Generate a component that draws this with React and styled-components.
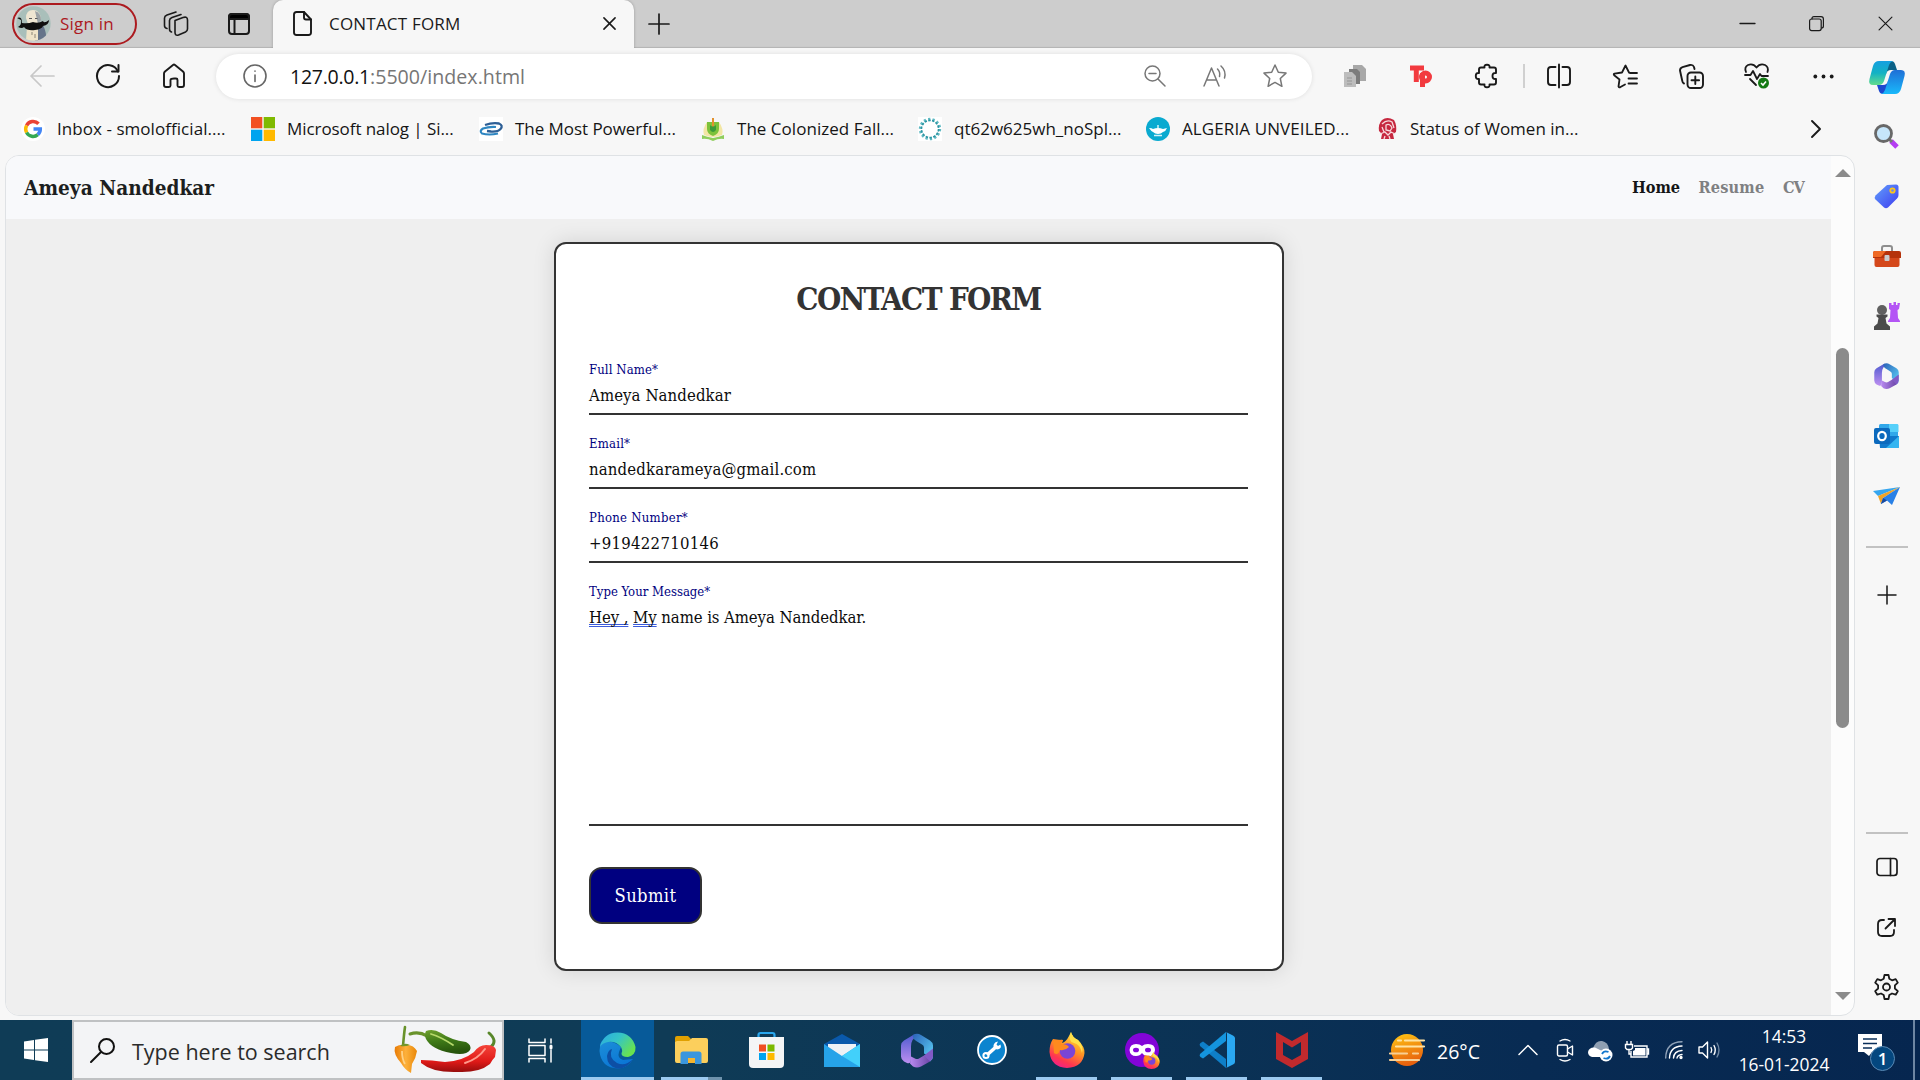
import React from 'react';
import styled, { createGlobalStyle } from 'styled-components';

const sans = '"Open Sans", "Noto Sans", sans-serif';
const serif = '"DejaVu Serif Condensed", "DejaVu Serif", serif';

const GlobalStyle = createGlobalStyle`
  *, *::before, *::after { box-sizing: border-box; }
  body { margin: 0; overflow: hidden; background: #f7f7f7; }
`;

const Desktop = styled.div`
  display: flex;
  flex-direction: column;
  width: 1920px;
  height: 1080px;
  overflow: hidden;
  font-family: ${sans};
  color: #1b1b1b;
`;

const Svg = styled.svg`
  display: block;
  flex: none;
  width: ${p => p.$w}px;
  height: ${p => p.$h || p.$w}px;
  overflow: visible;
`;

const Line = ({ w, h, vb, color = '#1a1a1a', sw = 1.7, children }) => (
  <Svg $w={w} $h={h || w} viewBox={vb || `0 0 ${w} ${h || w}`} fill="none" stroke={color}
    strokeWidth={sw} strokeLinecap="round" strokeLinejoin="round">{children}</Svg>
);

const Cell = styled.div`
  display: flex;
  align-items: center;
  justify-content: center;
  flex: none;
  width: ${p => p.$w}px;
  height: 100%;
`;

const Spacer = styled.div`flex: 1;`;

/* ---------- Tab strip ---------- */
const TabStrip = styled.header`
  display: flex;
  height: 48px;
  flex: none;
  padding-bottom: 1px;
  background: #cdcdcd;
  box-shadow: inset 0 -2px 1px -1px #b4b4b4;
`;
const Profile = styled.div`
  display: flex;
  align-items: center;
  gap: 9px;
  width: 125px;
  height: 42px;
  margin: 3px 7px 0 12px;
  padding: 0 0 1px 2px;
  border: 2px solid #ac1a1f;
  border-radius: 21px;
  color: #ac1a1f;
  font-size: 17px;
  letter-spacing: 0.2px;
  line-height: 22px;
  white-space: nowrap;
`;
const Tab = styled.div`
  display: flex;
  align-items: center;
  width: 361px;
  height: 48px;
  margin-left: 3px;
  padding: 0 18px 1px 20px;
  background: #f7f7f7;
  border-radius: 10px 10px 0 0;
  box-shadow: 0 0 3px rgba(0, 0, 0, 0.25);
  clip-path: inset(0 -4px 0 -4px);
`;
const TabTitle = styled.span`
  flex: 1;
  padding-left: 17px;
  font-size: 17px;
  line-height: 22px;
  letter-spacing: 0.2px;
`;

/* ---------- Browser frame ---------- */
const Browser = styled.div`
  display: flex;
  height: 972px;
  flex: none;
  background: #f7f7f7;
`;
const BrowserMain = styled.div`
  display: flex;
  flex-direction: column;
  width: 1855px;
  flex: none;
`;
const Toolbar = styled.div`
  display: flex;
  align-items: center;
  height: 57px;
  padding: 0 0 1px 9px;
`;
const AddressBar = styled.div`
  display: flex;
  align-items: center;
  flex: none;
  width: 1096px;
  height: 45px;
  margin: 0 10px 0 9px;
  padding: 0 7px 0 27px;
  border-radius: 23px;
  background: #fff;
  box-shadow: 0 0 5px rgba(0, 0, 0, 0.1);
`;
const Url = styled.span`
  flex: 1;
  padding-left: 23px;
  font-size: 19.6px;
  letter-spacing: 0.03px;
  color: #767676;
`;
const Host = styled.span`
  color: #111;
  letter-spacing: -0.3px;
`;
const Divider = styled.div`
  flex: none;
  width: 2px;
  height: 24px;
  margin: 0 1px 0 3px;
  background: #d0d0d0;
`;
const Bookmarks = styled.div`
  display: flex;
  align-items: center;
  height: 48px;
  padding: 0 34px 1px 21px;
  margin-bottom: 2px;
`;
const Bookmark = styled.div`
  display: flex;
  align-items: center;
  gap: 12px;
  width: ${p => p.$w}px;
  font-size: 17px;
  line-height: 22px;
  letter-spacing: ${p => p.$ls || 0}px;
  white-space: nowrap;
  color: #151515;
`;

/* ---------- Page ---------- */
const Page = styled.div`
  display: flex;
  width: 1850px;
  height: 861px;
  margin-left: 5px;
  border: 1px solid #dfe2e5;
  border-radius: 14px;
  overflow: hidden;
  background: #fcfcfc;
`;
const Content = styled.div`
  display: flex;
  flex-direction: column;
  width: 1825px;
  background: #efefef;
  font-family: ${serif};
`;
const Navbar = styled.nav`
  display: flex;
  align-items: center;
  height: 63px;
  flex: none;
  padding: 0 27px 0 18px;
  background: #f8f9fb;
  font-weight: bold;
`;
const Brand = styled.div`
  flex: 1;
  font-size: 20.6px;
  letter-spacing: 0.03px;
  color: #1c1e20;
`;
const NavLink = styled.a`
  margin-left: 18.5px;
  font-size: 16.2px;
  letter-spacing: ${p => p.$ls}px;
  color: ${p => (p.$active ? '#141516' : '#7f8082')};
`;
const Card = styled.div`
  width: 730px;
  height: 729px;
  margin: 23px 0 0 548px;
  padding: 36px 34px 0 33px;
  border: 2px solid #333;
  border-radius: 12px;
  background: #fff;
  box-shadow: 0 0 22px rgba(0, 0, 0, 0.12);
`;
const Title = styled.h1`
  margin: 0 0 41px;
  font-size: 31px;
  line-height: 39px;
  padding-bottom: 1px;
  letter-spacing: -1.6px;
  text-align: center;
  color: #333;
`;
const Field = styled.div`
  height: ${p => p.$h || 54}px;
  margin-bottom: 20px;
  border-bottom: 2px solid #333;
`;
const Label = styled.div`
  margin-bottom: 5px;
  font-size: 13px;
  line-height: 18px;
  letter-spacing: ${p => p.$ls}px;
  color: navy;
`;
const Value = styled.div`
  font-size: 16.6px;
  line-height: 24px;
  letter-spacing: ${p => p.$ls}px;
  color: #0c0c0c;
`;
const Grammar = styled.span`
  text-decoration: underline double #3b5bdb 1px;
  text-underline-offset: 1px;
  text-decoration-skip-ink: none;
`;
const Submit = styled.button`
  display: block;
  width: 113px;
  height: 57px;
  margin-top: 41px;
  padding: 0;
  border: 2px solid #333;
  border-radius: 13px;
  background: navy;
  color: #fff;
  font-family: ${serif};
  font-size: 18.2px;
  letter-spacing: 0.4px;
`;
const Scrollbar = styled.div`
  display: flex;
  flex-direction: column;
  align-items: center;
  width: 23px;
  padding: 13px 0 15px;
`;
const Thumb = styled.div`
  width: 13px;
  height: 380px;
  margin-top: 171px;
  border-radius: 7px;
  background: #8b8b8b;
`;

/* ---------- Sidebar ---------- */
const Sidebar = styled.aside`
  display: flex;
  flex-direction: column;
  align-items: center;
  width: 65px;
  padding: 0 2px 3px 0;
`;
const SideCell = styled.div`
  display: flex;
  align-items: center;
  justify-content: center;
  width: 60px;
  height: ${p => p.$h || 60}px;
  flex: none;
`;
const SideRule = styled.div`
  width: 42px;
  height: 2px;
  flex: none;
  margin: ${p => p.$m};
  background: #c2c2c2;
`;

/* ---------- Taskbar ---------- */
const Taskbar = styled.footer`
  display: flex;
  align-items: center;
  height: 60px;
  flex: none;
  background: linear-gradient(90deg, #0f3c56 0%, #0f3b56 35%, #0b3355 60%, #082b53 80%, #06264f 100%);
  color: #fff;
`;
const Search = styled.div`
  display: flex;
  align-items: center;
  flex: none;
  width: 432px;
  height: 60px;
  padding: 0 4px 0 16px;
  border: 2px solid #bfc1c3;
  background: #f3f4f6;
  color: #2b2b2b;
  font-size: 21.5px;
`;
const SearchText = styled.span`
  flex: 1;
  padding: 3px 0 0 17px;
  white-space: nowrap;
`;
const Task = styled.div`
  display: flex;
  flex: none;
  flex-direction: column;
  align-items: center;
  justify-content: space-between;
  width: ${p => (p.$active ? 73 : 75)}px;
  height: 60px;
  padding-top: 10px;
  background: ${p => (p.$active ? '#075a99' : 'transparent')};
`;
const TaskIcon = styled.div`
  display: flex;
  align-items: center;
  justify-content: center;
  height: 40px;
`;
const Underline = styled.div`
  width: ${p => (p.$full ? 73 : 61)}px;
  height: 3px;
  background: ${p => (p.$split ? 'linear-gradient(90deg, #9ccaf0 0 47px, #6f93ad 47px 61px)' : '#9ccaf0')};
`;
const Temp = styled.span`
  flex: none;
  width: 94px;
  padding: 2px 0 0 12px;
  font-size: 19.5px;
  white-space: nowrap;
`;
const Tray = styled.div`
  display: flex;
  align-items: center;
`;
const TrayItem = styled.div`
  margin-right: ${p => p.$mr}px;
`;
const Clock = styled.div`
  width: 92px;
  margin-right: 28px;
  font-size: 17.4px;
  line-height: 28px;
  text-align: center;
  white-space: nowrap;
`;
const PeekEdge = styled.div`
  width: 2px;
  height: 60px;
  margin-left: 17px;
  background: #6d86a3;
`;
const NoteWrap = styled.div`
  position: relative;
  width: 38px;
  height: 40px;
`;
const NoteBadge = styled.div`
  position: absolute;
  left: 12px;
  top: 16px;
  display: flex;
  align-items: center;
  justify-content: center;
  width: 25px;
  height: 25px;
  border: 1.5px solid #5a8ab5;
  border-radius: 50%;
  background: #04477f;
  font-size: 17px;
  font-weight: 600;
  line-height: 20px;
`;

/* ---------- Icons ---------- */
const Avatar = () => (
  <Svg $w={35} viewBox="0 0 35 35">
    <defs><clipPath id="av"><circle cx="17.5" cy="17.5" r="17.2" /></clipPath></defs>
    <g clipPath="url(#av)">
      <rect width="35" height="35" fill="#a9bfba" />
      <path d="M19 35 19 20 27 19Q31 27 30 35z" fill="#66748a" />
      <path d="M10 35 11 20 22 20 22 35z" fill="#efe3c8" />
      <path d="M10 12Q10 4 17 4T25 13L22 19 12 18z" fill="#efe6d2" />
      <path d="M19 5Q25 7 25 14L22 18z" fill="#9ba2a6" />
      <path d="M13 12.5h3M19 12.5h2.500" stroke="#57585b" strokeWidth="1" />
      <path d="M1 12Q6 10 6 17 12 18 17 16 22 18 27 15 28 18 33 14 33 19 27 20 26 23 19 24 11 25 8 21 6 23 2 21 6 19 5 14z" fill="#101010" />
      <path d="M16 26v3M19 28v4" stroke="#8b8577" />
    </g>
  </Svg>
);
const Workspaces = () => (
  <Line w={26} sw={1.6}>
    <path d="M12 9.500 20 6.500Q24.500 5 24.500 9v9Q24.500 20 22.500 21L15.500 24Q12 25 12 21.500z" />
    <path d="M8.500 21Q6.500 20.500 6.500 18V9.500Q6.500 7.500 9 6.500L18 3.500" />
    <path d="M4 17.500Q1.500 17 1.500 14.500V7Q1.500 5 4 4L13 1" />
  </Line>
);
const TabActions = () => (
  <Line w={22} sw={2}>
    <rect x="1" y="1" width="20" height="20" rx="3" />
    <path d="M1 6V4q0-3 3-3h14q3 0 3 3v2z" fill="#000" /><path d="M6.500 7v14" />
  </Line>
);
const FileIcon = () => (
  <Line w={19} h={25} sw={1.9}>
    <path d="M3.500 1H11l7 7.500V21.500Q18 24 15.500 24h-12Q1 24 1 21.500v-18Q1 1 3.500 1z" /><path d="M11 1v5.500q0 2 2 2h5" />
  </Line>
);
const Cross = ({ s = 13, sw = 1.7 }) => <Line w={s} sw={sw} vb="0 0 14 14"><path d="M1 1 13 13M13 1 1 13" /></Line>;
const PlusIcon = ({ s = 20 }) => <Line w={s} vb="0 0 20 20"><path d="M10 0v20M0 10h20" /></Line>;
const Gmark = () => (
  <Svg $w={24} viewBox="0 0 24 24">
    <circle cx="12" cy="12" r="12" fill="#fff" />
    <g fill="none" strokeWidth="3.500">
      <path d="M17.500 6.800A7.300 7.300 0 0 0 5.600 8.500" stroke="#ea4335" />
      <path d="M5.600 8.500A7.300 7.300 0 0 0 5.600 15.500" stroke="#fbbc05" />
      <path d="M5.600 15.500A7.300 7.300 0 0 0 16.800 17.600" stroke="#34a853" />
      <path d="M16.800 17.600A7.300 7.300 0 0 0 19.300 12H12.500" stroke="#4285f4" />
    </g>
  </Svg>
);
const MsLogo = () => (
  <Svg $w={24} viewBox="0 0 24 24">
    <path fill="#f25022" d="M0 0h11.300v11.300H0z" /><path fill="#7fba00" d="M12.700 0H24v11.300H12.700z" />
    <path fill="#00a4ef" d="M0 12.700h11.300V24H0z" /><path fill="#ffb900" d="M12.700 12.700H24V24H12.700z" />
  </Svg>
);
const Ribbon = () => (
  <Svg $w={24} viewBox="0 0 24 24">
    <rect width="24" height="24" fill="#fff" />
    <path d="M6 8Q13 5.500 20 6.500 24.500 8.500 21.500 12 19 15 12 14.500L8 14" fill="none" stroke="#2d5f96" strokeWidth="2.300" />
    <path d="M19 16.500Q10 18.500 3 16.500 0 14 4 11.500 10 9.500 17 10" fill="none" stroke="#2e86c1" strokeWidth="2.200" />
  </Svg>
);
const Crest = () => (
  <Svg $w={24} viewBox="0 0 24 24">
    <path d="M6 5Q1 12 3 18 12 22 21 18 23 12 18 5z" fill="#f2e6a4" />
    <path d="M6 5h12v7q0 5-6 7-6-2-6-7z" fill="#7cc23a" /><path d="M12 1v13" stroke="#e2912e" strokeWidth="2" />
    <path d="M9 8q3 3 6 0v5q-3 4-6 0z" fill="#3b9a38" />
    <path d="M1 18q5 2 11 3 6-1 11-3v4q-5-1-11 2-6-3-11-2z" fill="#8fce5c" />
  </Svg>
);
const Ring = () => (
  <Svg $w={24} viewBox="0 0 24 24">
    <rect width="24" height="24" fill="#fff" />
    <circle cx="12" cy="12" r="9.800" fill="none" stroke="#5fb9c2" strokeWidth="2.800" strokeDasharray="2.200 2.200" />
    <circle cx="12" cy="12" r="8.600" fill="none" stroke="#2b96a3" strokeWidth="1.700" strokeDasharray="2.500 1.350" />
  </Svg>
);
const Lamp = () => (
  <Svg $w={24} viewBox="0 0 24 24">
    <circle cx="12" cy="12" r="12" fill="#0aaad0" />
    <path d="M3 11q3 0 4 1 5-2 10 0l4-1q-1 3-4 4-2 2-5 2t-5-2q-2-1-4-4z" fill="#fff" /><path d="M8 18.500h8M12 8v3" stroke="#d5f2f8" strokeWidth="1.500" />
  </Svg>
);
const Seal = () => (
  <Svg $w={21} $h={24} viewBox="0 0 21 24">
    <path d="M5 3Q10-1 17 3 20 8 19 15L16 17 17 22H4L5 17 2 14Q1 7 5 3z" fill="#c6283f" />
    <path d="M5 7Q10 2 15 5L17 11M5 10l2 5M9 8q4-2 6 3l-2 3-4-1zM3 17l5-2 3 3 3-3 4 2M7 22l1-3M13 22l-1-3" fill="none" stroke="#f8d9dd" strokeWidth="1.300" />
  </Svg>
);
const Copilot = () => (
  <Svg $w={36} $h={33} viewBox="0 0 36 33">
    <defs>
      <linearGradient id="cp1" x1="0" y1="0" x2="0" y2="1"><stop offset="0" stopColor="#159fe0" /><stop offset=".5" stopColor="#13b2c4" /><stop offset="1" stopColor="#63dc8c" /></linearGradient>
      <linearGradient id="cp2" x1="0" y1="0" x2="0" y2="1"><stop offset="0" stopColor="#1f6fd6" /><stop offset="1" stopColor="#19b9fb" /></linearGradient>
    </defs>
    <path d="M18 0h4q3 0 4 3l2 6h-6q-4 0-5 4z" fill="#0b6186" />
    <path d="M18 33h-4q-3 0-4-3l-2-6h6q4 0 5-4z" fill="#1c48cf" />
    <path d="M10 0H24Q21 1 20 4L15 20Q13.500 24 10 24H4Q-1 24 .5 18L4 5Q5.500 0 10 0z" fill="url(#cp1)" />
    <path d="M26 33H12Q15 32 16 29L21 13Q22.500 9 26 9H32Q37 9 35.500 15L32 28Q30.500 33 26 33z" fill="url(#cp2)" />
  </Svg>
);
const SearchColor = () => (
  <Svg $w={25} viewBox="0 0 25 25">
    <path d="m17 17 6 6" stroke="#b43df2" strokeWidth="5" /><path d="m15 15 3 3" stroke="#777" strokeWidth="3" />
    <circle cx="9.500" cy="9.500" r="8" fill="#c6e6fb" stroke="#686868" strokeWidth="2.800" />
  </Svg>
);
const Tag = () => (
  <Svg $w={25} viewBox="0 0 25 25">
    <defs><linearGradient id="tg" x2="1" y2="1"><stop stopColor="#62a0fb" /><stop offset="1" stopColor="#3d3bf0" /></linearGradient></defs>
    <path d="M13 1 22 .5Q24.500.5 24.500 3V11Q24.500 13 23 14.500L14 23.500Q12 25 10 23.500L1.500 15.500Q0 13.500 1.500 11.500z" fill="url(#tg)" />
    <circle cx="18.500" cy="6.500" r="2.200" fill="#6e86e8" stroke="#fcc419" strokeWidth="1.800" />
  </Svg>
);
const Toolbox = () => (
  <Svg $w={28} $h={22} viewBox="0 0 28 22">
    <path d="M9 6V3q0-2 2-2h6q2 0 2 2v3" fill="none" stroke="#8e8e8e" strokeWidth="2" />
    <path d="M1.500 9h25v11q0 2-2 2h-21q-2 0-2-2z" fill="#d4481b" /><path d="M2 6h24q2 0 2 2v5H0V8q0-2 2-2z" fill="#b5330c" /><path d="M2 6h11L8 12H0V8q0-2 2-2z" fill="#ef6a26" />
    <rect x="11.500" y="10" width="5" height="6" rx="1" fill="#c9ccce" />
  </Svg>
);
const Chess = () => (
  <Svg $w={27} $h={28} viewBox="0 0 27 28">
    <path d="M16 1h2.500v2h2V0h2.500v3h1.500V1H27l-1 6-1.500 1 .5 8 2 3v1H15v-1l2-3 .5-8L16 7z" fill="#b455f5" />
    <circle cx="9" cy="8" r="5" fill="#606060" />
    <path d="M3.500 12.500h11v2l-2 1.500 1 5.500 3.500 3V28H1v-3.500l3.500-3 1-5.500-2-1.500z" fill="#4b4b4b" />
  </Svg>
);
const M365 = ({ w = 25, h = 26 }) => (
  <Svg $w={w} $h={h} viewBox="0 0 32 34">
    <defs>
      <linearGradient id="m1" x2="0" y2="1"><stop stopColor="#4f5bd0" /><stop offset="1" stopColor="#bd8ff0" /></linearGradient>
      <linearGradient id="m2" x2="1" y2="1"><stop stopColor="#2b62b8" /><stop offset="1" stopColor="#5fd8fb" /></linearGradient>
      <linearGradient id="m3" x2="1"><stop stopColor="#b98af0" /><stop offset="1" stopColor="#6c47a8" /></linearGradient>
    </defs>
    <path d="M13 1 3 7Q0 9 0 12v11q0 3 3 5l3 1.500Q10 31 10 25V13Q10 5 17 2z" fill="url(#m1)" />
    <path d="M12 1.500Q16-1 20 1.500L29 7q3 2 3 5v11q0 3-3 5 0-5-4-7l-2-1v-6q0-2-2-3l-5-3Q11 5 12 1.500z" fill="url(#m2)" />
    <path d="M9 30 10 23l4 2q2 1 4 0l5-3 5-1 1 7-9 5q-4 2-8 0z" fill="url(#m3)" />
    <path d="M29 28q3-2 3-5v-8l-9 7z" fill="#825ac6" />
  </Svg>
);
const Outlook = () => (
  <Svg $w={25} $h={24} viewBox="0 0 25 24">
    <rect x="5" y="0" width="19" height="14" rx="1.500" fill="#31a8ea" /><path d="M15 0h8q1.500 0 1.500 1.500V8H15z" fill="#56d0fa" />
    <path d="M5 12h20v10.500q0 1.500-1.500 1.500H6z" fill="#1179cc" /><path d="m25 12-13 12h11.500q1.500 0 1.500-1.500z" fill="#35b5f1" />
    <rect x="0" y="4" width="16" height="16" rx="2" fill="#0b69bd" /><ellipse cx="8" cy="12" rx="3.800" ry="4.200" fill="none" stroke="#fff" strokeWidth="2.200" />
  </Svg>
);
const Plane = () => (
  <Svg $w={27} $h={18} viewBox="0 0 27 18">
    <path d="M0 4 27 0 5 9z" fill="#36a6ef" /><path d="M5 9 27 0 10 11 8 17z" fill="#f0a326" /><path d="M10 11 27 0 19 18 14 13.500 8 17z" fill="#2980e6" />
    <path d="m8 17 2-6 4 2.500z" fill="#1a4aa0" />
  </Svg>
);
const EdgeLogo = () => (
  <Svg $w={37} viewBox="0 0 37 37">
    <defs>
      <linearGradient id="e1" x2="1" y2=".6"><stop stopColor="#2ba9e4" /><stop offset=".5" stopColor="#35c5c5" /><stop offset="1" stopColor="#68e24f" /></linearGradient>
      <linearGradient id="e2" x2=".6" y2="1"><stop stopColor="#1d8fd8" /><stop offset="1" stopColor="#0a75d5" /></linearGradient>
    </defs>
    <path d="M1 15Q.5 12 3 9 15 8 22 15L20 20Q18 26 24 28L34 27Q29 36 19 36.500 2 36 .5 19z" fill="url(#e2)" />
    <path d="M13 17Q9 26 18 31 26 35 34 27 28 37 18 36.500 8 34 8 24 9 18 13 17z" fill="#0d4fa5" />
    <path d="M1 15Q4 1 18.500.5 33 1 36.500 15 37 23 29 25 22 25 22.500 21 24 19 22 15 17 9 9 10 3 11 1 15z" fill="url(#e1)" />
  </Svg>
);
const Folder = () => (
  <Svg $w={33} $h={28} viewBox="0 0 33 28">
    <path d="M0 2q0-2 2-2h11l3 3v5H0z" fill="#e0a000" /><path d="M2 5h12l3-3h14q2 0 2 2v21q0 2-2 2H2q-2 0-2-2V6z" fill="#fccf5c" />
    <path d="M5.500 28V18q0-2.500 2.500-2.500h16q2.500 0 2.500 2.500v10H20v-6h-7v6z" fill="#3b96dd" /><path d="M13 22h7v5h-7z" fill="#f6b52e" />
  </Svg>
);
const Store = () => (
  <Svg $w={35} $h={36} viewBox="0 0 35 36">
    <path d="M9.500 7V3q0-2 2-2h12q2 0 2 2v4" fill="none" stroke="#2aa7ee" strokeWidth="2.200" />
    <path d="M0 5h35v27q0 4-4 4H4q-4 0-4-4z" fill="#f4f5f6" />
    <path fill="#f04e23" d="M10 12.500h7v7h-7z" /><path fill="#7cb900" d="M18.500 12.500h7v7h-7z" /><path fill="#00a2ed" d="M10 21h7v7h-7z" /><path fill="#fdb900" d="M18.500 21h7v7h-7z" />
  </Svg>
);
const Mail = () => (
  <Svg $w={36} $h={33} viewBox="0 0 36 33">
    <path d="M0 10 18 0 36 10v8H0z" fill="#0a59ab" /><path d="M4 10h28v12H4z" fill="#eef1f5" />
    <path d="M0 10 18 22 36 10v23H0z" fill="#26a3e9" /><path d="M36 10 18 22l18 11z" fill="#42d0fb" />
  </Svg>
);
const Wrench = () => (
  <Svg $w={30} viewBox="0 0 30 30">
    <circle cx="15" cy="15" r="14" fill="#0b84cf" stroke="#fff" strokeWidth="1.800" />
    <path d="m10 20 10-9" stroke="#fff" strokeWidth="3.400" /><circle cx="9" cy="20.500" r="2.600" fill="none" stroke="#fff" strokeWidth="2" />
    <path d="M23.500 9.500Q25 14 20 14.500 15 13 17 9 18 6.500 21 6.500L19.500 9.500 21 11z" fill="#fff" />
  </Svg>
);
const Firefox = ({ s = 36 }) => (
  <Svg $w={s} viewBox="0 0 36 36">
    <defs><linearGradient id="ff" x1=".8" y1="0" x2=".3" y2="1"><stop stopColor="#ffe94a" /><stop offset=".45" stopColor="#ff9422" /><stop offset=".8" stopColor="#ff3650" /><stop offset="1" stopColor="#f0208a" /></linearGradient></defs>
    <path d="M4 7Q5 10 8 10 11 7 14 8L13 11Q17 10 20 4L22 0Q23 5 29 8 36 15 35.500 21 34 35 18 36 2 35 .5 20 .5 12 4 7z" fill="url(#ff)" />
    <circle cx="18.500" cy="19" r="7.800" fill="#7a45d6" /><path d="M4 7Q10 8 14 8L12 12Q18 12 20 15 16 19 11 18 9 24 5 21z" fill="#ff8a1e" />
    <path d="M22 0Q23 5 29 8 35 14 33 21 31 12 25 11 18 9 22 0z" fill="#ffe14a" />
  </Svg>
);
const MaskIcon = styled.div`
  display: flex;
  position: relative;
`;
const MaskBadge = styled.div`
  position: absolute;
  right: -1px;
  bottom: -2px;
`;
const PrivateFox = () => (
  <MaskIcon>
    <Svg $w={34} $h={34} viewBox="0 0 34 34">
      <circle cx="17" cy="17" r="17" fill="#8205d8" />
      <path d="M11 11Q15 11 17 13 19 11 23 11 30 11 30 17 29 24 23 23 19 23 17 20 15 23 11 23 5 23 4.500 17 5 11 11 11z" fill="#fff" />
      <ellipse cx="11" cy="17" rx="3" ry="2.300" fill="#8205d8" /><ellipse cx="23" cy="17" rx="3" ry="2.300" fill="#8205d8" />
    </Svg>
    <MaskBadge><Firefox s={17} /></MaskBadge>
  </MaskIcon>
);
const Vscode = () => (
  <Svg $w={36} viewBox="0 0 36 36">
    <path d="M1.500 11 4 9.500 27 27v9L1 14Q0 12 1.500 11z" fill="#0e7fc8" /><path d="M1.500 25 4 26.500 27 9V0L1 22Q0 24 1.500 25z" fill="#1494dd" />
    <path d="M27 0 34 3.500Q36 4.500 36 6v24q0 1.500-2 2.500L27 36q1-.5 1-2V2q0-1.500-1-2z" fill="#2aa8f2" />
  </Svg>
);
const Mcafee = () => (
  <Svg $w={32} $h={36} viewBox="0 0 32 36">
    <path d="M0 0 16 9 32 0V27L16 36 0 27zM7 10V23L16 28 25 23V10L16 15.500z" fill="#c12a2d" fillRule="evenodd" />
  </Svg>
);
const Peppers = () => (
  <Svg $w={105} $h={50} viewBox="0 0 105 50">
    <defs>
      <linearGradient id="po" x2="1"><stop stopColor="#e87b05" /><stop offset=".5" stopColor="#fdb13c" /><stop offset="1" stopColor="#e98708" /></linearGradient>
      <linearGradient id="pg" x2=".2" y2="1"><stop stopColor="#6fa02d" /><stop offset=".5" stopColor="#3f7a18" /><stop offset="1" stopColor="#27540c" /></linearGradient>
      <linearGradient id="pr" x2="0" y2="1"><stop stopColor="#f4443a" /><stop offset=".6" stopColor="#e01a18" /><stop offset="1" stopColor="#960d0d" /></linearGradient>
    </defs>
    <path d="M10 21Q11 9 12 2" stroke="#68922b" strokeWidth="2.600" fill="none" strokeLinecap="round" />
    <path d="M2 22Q7 19 13 20 20 19 24 26 23 33 19 39L18 48Q12 45 8 38 0 29 2 22z" fill="url(#po)" /><path d="M7 21q4-4 10-1-5 2-10 1z" fill="#72962a" />
    <path d="M9 26Q9 34 12 39" stroke="#ffd184" strokeWidth="1.800" fill="none" />
    <path d="M17 9Q26 6 34 11" stroke="#68922b" strokeWidth="3" fill="none" strokeLinecap="round" />
    <path d="M33 6Q40 3 48 8 58 15 73 17 79 20 77 25 73 31 58 28 38 24 33 14 31 10 33 6z" fill="url(#pg)" />
    <path d="M38 9Q48 12 60 20" stroke="#b7d96b" strokeWidth="1.800" fill="none" strokeLinecap="round" />
    <path d="M98 22Q105 16 96 8" stroke="#58872b" strokeWidth="3" fill="none" strokeLinecap="round" />
    <path d="M28 35Q38 35 52 37 70 36 81 27 86 20 93 20 102 20 103 25L102 32Q99 35 97 39 86 48 65 47 40 48 28 38z" fill="url(#pr)" />
    <path d="M72 38Q85 34 92 24" stroke="#ff9a8c" strokeWidth="2" fill="none" strokeLinecap="round" />
  </Svg>
);
const Sun = () => (
  <Svg $w={36} $h={34} viewBox="0 0 36 34">
    <defs><linearGradient id="sn" x2=".3" y2="1"><stop stopColor="#ffc814" /><stop offset="1" stopColor="#e8620e" /></linearGradient></defs>
    <circle cx="18" cy="17" r="16" fill="url(#sn)" />
    <g stroke="#ffe3a3" strokeWidth="2.200" strokeLinecap="round"><path d="M9 7.500h3M16 7.500h19M7 13.500h28" /><path d="M1 20.500h17M24 20.500h5M1 27h29" stroke="#f8cf94" /></g>
  </Svg>
);

const Notifications = () => (
  <NoteWrap>
    <Svg $w={24} $h={24} viewBox="0 -4 24 24">
      <path d="M0 0h24v18H14l-3 4-5-4H0z" fill="#fff" /><path d="M5 5h14M5 9.500h14M5 14h9" stroke="#0a2f5a" strokeWidth="1.400" />
    </Svg>
    <NoteBadge>1</NoteBadge>
  </NoteWrap>
);

const bookmarks = [
  { icon: <Gmark />, text: 'Inbox - smolofficial....', w: 230, ls: 0.05 },
  { icon: <MsLogo />, text: 'Microsoft nalog | Si...', w: 228, ls: -0.07 },
  { icon: <Ribbon />, text: 'The Most Powerful...', w: 222, ls: -0.05 },
  { icon: <Crest />, text: 'The Colonized Fall...', w: 217, ls: 0.03 },
  { icon: <Ring />, text: 'qt62w625wh_noSpl...', w: 228 },
  { icon: <Lamp />, text: 'ALGERIA UNVEILED...', w: 231, ls: 0.1 },
  { icon: <Seal />, text: 'Status of Women in...', w: 230 },
];

const tasks = [
  { icon: <Folder />, open: true, split: true },
  { icon: <Store /> }, { icon: <Mail /> }, { icon: <M365 w={32} h={35} /> }, { icon: <Wrench /> },
  { icon: <Firefox />, open: true }, { icon: <PrivateFox />, open: true },
  { icon: <Vscode />, open: true }, { icon: <Mcafee />, open: true },
];

const sidebarApps = [<SearchColor />, <Tag />, <Toolbox />, <Chess />, <M365 />, <Outlook />, <Plane />];

const fields = [
  { label: 'Full Name*', value: 'Ameya Nandedkar', lls: 0.1, vls: 0.1 },
  { label: 'Email*', value: 'nandedkarameya@gmail.com', lls: 0.2, vls: 0.15 },
  { label: 'Phone Number*', value: '+919422710146', lls: 0.28, vls: 0.27 },
];

export default function App() {
  return (
    <>
      <GlobalStyle />
      <Desktop>
        <TabStrip>
          <Profile><Avatar />Sign in</Profile>
          <Cell $w={63}><Workspaces /></Cell>
          <Cell $w={63}><TabActions /></Cell>
          <Tab><FileIcon /><TabTitle>CONTACT FORM</TabTitle><Cross /></Tab>
          <Cell $w={50}><PlusIcon /></Cell>
          <Spacer />
          <Cell $w={69}><Line w={15} sw={1.300}><path d="M0 7.500h15" /></Line></Cell>
          <Cell $w={69}><Line w={15} sw={1.200}><path d="M3 3V2.500Q3 .6 5 .6h7Q14.400.6 14.400 3v7q0 2-1.900 2" /><rect x=".6" y="3" width="11.600" height="11.600" rx="2" /></Line></Cell>
          <Cell $w={69}><Cross s={15} sw={1.100} /></Cell>
        </TabStrip>

        <Browser>
          <BrowserMain>
            <Toolbar>
              <Cell $w={66}><Line w={24} color="#c8c8c8"><path d="M24 12H1M11 2 1 12 11 22" /></Line></Cell>
              <Cell $w={66}><Line w={24} sw={2}><path d="M22 7.500A11 11 0 1 0 23 12" /><path d="M22.500 1v6.500H16" /></Line></Cell>
              <Cell $w={66}><Line w={22} h={24} sw={1.900}><path d="M1 9.500Q1 8.500 2 7.500L10 1q1-.8 2 0l8 6.500q1 1 1 2V21q0 2-2 2h-3q-1.500 0-1.500-1.500V16q0-1.500-1.500-1.500h-2Q7.500 14.500 7.500 16v5.500Q7.500 23 6 23H3q-2 0-2-2z" /></Line></Cell>
              <AddressBar>
                <Line w={24} color="#666" sw={1.600}><circle cx="12" cy="12" r="11" /><path d="M12 11v6.500M12 7v.2" /></Line>
                <Url><Host>127.0.0.1</Host>:5500/index.html</Url>
                <Cell $w={60}><Line w={22} color="#777" sw={1.500}><circle cx="8.500" cy="8.500" r="7.500" /><path d="M5 8.500h7M14 14l7 7" /></Line></Cell>
                <Cell $w={60}><Line w={24} h={22} color="#777" sw={1.500}><path d="m1 21 7.500-18L16 21M3.500 15h10M14.500 4q3 3 2 7.500M18 1q5.500 5 3.500 12" /></Line></Cell>
                <Cell $w={60}><Line w={24} color="#777" sw={1.500}><path d="m12 1 3.300 7.200 7.700.9-5.700 5.400 1.600 7.800L12 18.400l-6.900 3.900 1.600-7.800L1 9.100l7.700-.9z" /></Line></Cell>
              </AddressBar>
              <Cell $w={66}><Svg $w={22} viewBox="0 0 22 22"><path d="M9 0h9l4 4v12H9z" fill="#a8a8a8" /><path d="M5 4h8l3 3v12H5z" fill="#7c7c7c" /><path d="M0 7h8l4 4v11H0z" fill="#bdbdbd" /><path d="M3 13h5M3 16h5M3 19h5" stroke="#969696" strokeWidth="1.200" /></Svg></Cell>
              <Cell $w={66}><Svg $w={22} viewBox="0 0 22 22" fill="none" stroke="#f23a3f"><path d="M0 3h14" strokeWidth="5" /><path d="M6.300 2v15" strokeWidth="5" /><path d="M12.500 8v14" strokeWidth="5" /><circle cx="15.500" cy="12" r="4" strokeWidth="5" /></Svg></Cell>
              <Cell $w={66}><Line w={24} vb="1 0 24 24" sw={1.900}><path d="M7 3.500h3.500Q10 .8 13 .8t2.500 2.700H20q2 0 2 2V9Q18.500 8.500 18.500 12t3.500 3v3.500q0 2-2 2h-4.500Q16 23.200 13 23.200T10.500 20.500H7q-2 0-2-2V15Q1.800 15.500 1.800 12T5 9V5.500q0-2 2-2z" /></Line></Cell>
              <Divider />
              <Cell $w={66}><Line w={24} sw={1.900}><path d="M8.500 3H4Q1 3 1 6v12q0 3 3 3h4.500M15.500 3H20q3 0 3 3v12q0 3-3 3h-4.500M12 .5v23" /></Line></Cell>
              <Cell $w={66}><Line w={25} h={24} sw={1.800}><path d="M16 8.500 12.500 1.500 9 8.500 1.500 9.600Q0 10 1.500 11.500L6.500 15.500 5.500 22.500Q6 24 7.500 23L12 20.500M17 9h7M15.500 14.500H24M15.500 19.500H24" /></Line></Cell>
              <Cell $w={66}><Line w={25} sw={1.900}><path d="M5 19.500Q3.500 19 3.300 17L1 6.500Q1 4 3.500 3.200L11 1q3-.5 4 2l.5 2" /><rect x="8.500" y="8.500" width="15.500" height="15.500" rx="3.500" /><path d="M16.300 12.500v7.600M12.500 16.300h7.600" /></Line></Cell>
              <Cell $w={66}><Svg $w={26} $h={26} viewBox="0 0 26 26"><path d="M2 9Q0 4 4 2 9 0 12.500 4.500 16 0 21 2 25 4 23.500 9M1 12h5.500l2.500-4 4 8 3-5 1.500 2H24M6 16l6 6" fill="none" stroke="#1a1a1a" strokeWidth="1.800" strokeLinecap="round" strokeLinejoin="round" /><circle cx="19.500" cy="20" r="5.500" fill="#137a13" /><path d="m17 20 2 2 3-3.500" fill="none" stroke="#fff" strokeWidth="1.600" /></Svg></Cell>
              <Cell $w={66}><Svg $w={21} $h={5} viewBox="0 0 21 5" fill="#1a1a1a"><circle cx="2.300" cy="2.500" r="1.900" /><circle cx="10.500" cy="2.500" r="1.900" /><circle cx="18.700" cy="2.500" r="1.900" /></Svg></Cell>
            </Toolbar>
            <Bookmarks>
              {bookmarks.map(b => <Bookmark key={b.text} $w={b.w} $ls={b.ls}>{b.icon}<span>{b.text}</span></Bookmark>)}
              <Spacer />
              <Line w={10} h={18} sw={1.900} vb="-4 0 10 18"><path d="M-3 1 5 9-3 17" /></Line>
            </Bookmarks>
            <Page>
              <Content>
                <Navbar>
                  <Brand>Ameya Nandedkar</Brand>
                  <NavLink $active $ls={-0.05}>Home</NavLink>
                  <NavLink $ls={0.17}>Resume</NavLink>
                  <NavLink $ls={-0.9}>CV</NavLink>
                </Navbar>
                <Card>
                  <Title>CONTACT FORM</Title>
                  {fields.map(f => (
                    <Field key={f.label}>
                      <Label $ls={f.lls}>{f.label}</Label>
                      <Value $ls={f.vls}>{f.value}</Value>
                    </Field>
                  ))}
                  <Field $h={243}>
                    <Label $ls={0}>Type Your Message*</Label>
                    <Value $ls={-0.08}><Grammar>Hey ,</Grammar> <Grammar>My</Grammar> name is Ameya Nandedkar.</Value>
                  </Field>
                  <Submit>Submit</Submit>
                </Card>
              </Content>
              <Scrollbar>
                <Svg $w={16} $h={8} viewBox="0 0 16 8"><path d="M0 8 8 0l8 8z" fill="#8b8b8b" /></Svg>
                <Thumb />
                <Spacer />
                <Svg $w={16} $h={8} viewBox="0 0 16 8"><path d="m0 0 8 8 8-8z" fill="#8b8b8b" /></Svg>
              </Scrollbar>
            </Page>
          </BrowserMain>
          <Sidebar>
            <SideCell $h={58}><Copilot /></SideCell>
            {sidebarApps.map((icon, i) => <SideCell key={i}>{icon}</SideCell>)}
            <SideRule $m="20px 0 17px" />
            <SideCell><PlusIcon s={18} /></SideCell>
            <Spacer />
            <SideRule $m="0 0 3px" />
            <SideCell><Line w={22} h={18} sw={1.700}><rect x="1" y="0.500" width="20" height="17" rx="3" /><path d="M14.500.5v17" /></Line></SideCell>
            <SideCell><Line w={19} h={19} sw={1.800}><path d="M7 2H5Q1 2 1 6v8q0 4 4 4h8q4 0 4-4v-2M11.500 1H18v7M18 1l-9.500 9.500" /></Line></SideCell>
            <SideCell><Line w={25} h={26} sw={1.800}><path d="M10.500 1h4l.8 3.800 2.700 1.500 3.700-1.200 2.100 3.500-2.900 2.700v3.200l2.900 2.700-2.100 3.500-3.700-1.200-2.700 1.500-.8 4h-4l-.8-4L7 19.500l-3.700 1.200-2.100-3.500 2.900-2.700v-3.200L1.200 8.600l2.100-3.500L7 6.300l2.700-1.500z" /><circle cx="12.500" cy="13" r="3.500" /></Line></SideCell>
          </Sidebar>
        </Browser>

        <Taskbar>
          <Cell $w={72}><Svg $w={24} viewBox="0 0 24 24" fill="#fff"><path d="M0 3.400 10 2v9.400H0zM11 1.800 24 0v11.400H11zM0 12.500h10V22L0 20.600zM11 12.500h13V24l-13-1.800z" /></Svg></Cell>
          <Search>
            <Line w={25} h={25} color="#111" sw={2}><circle cx="16.500" cy="8.500" r="7.500" /><path d="M11 14 1 24" /></Line>
            <SearchText>Type here to search</SearchText>
            <Peppers />
          </Search>
          <Cell $w={77}><Line w={25} h={23} vb="2 0 25 23" color="#fff" sw={1.500}><path d="M1 0v3.500h16V0M1 23v-3.500h16V23M1 6.500h16v10H1zM23 0v4M23 11v12" /><path d="M23 7v2" strokeWidth="3" /></Line></Cell>
          <Task $active><TaskIcon><EdgeLogo /></TaskIcon><Underline $full /></Task>
          {tasks.map((t, i) => (
            <Task key={i}><TaskIcon>{t.icon}</TaskIcon>{t.open && <Underline $split={t.split} />}</Task>
          ))}
          <Cell $w={60} />
          <Sun />
          <Temp>26°C</Temp>
          <Tray>
            <TrayItem $mr={20}><Line w={18} h={10} color="#fff" sw={1.500}><path d="m0 9.500 9-9 9 9" /></Line></TrayItem>
            <TrayItem $mr={15}><Line w={16} h={22} color="#fff" sw={1.400}><rect x="0.500" y="6" width="10" height="11" rx="1.500" /><path d="m10.500 10 5-3v9l-5-3M3 2q5-3 10 0M3 20.500q5 3 10 0" /></Line></TrayItem>
            <TrayItem $mr={12}><Svg $w={25} $h={21} viewBox="0 0 25 21"><path d="M5 8Q8 0 14 1 20 2 21 9L12 16z" fill="#8f9fb2" /><path d="M4 17Q0 16 0 12 1 7 7 7.500L18 13v4z" fill="#fff" /><circle cx="18" cy="15" r="6.500" fill="#fff" /><path d="M14 14q2-4 6.500-2M22 16q-2 4-6.500 2" fill="none" stroke="#1377cd" strokeWidth="1.800" /></Svg></TrayItem>
            <TrayItem $mr={16}><Svg $w={24} $h={18} viewBox="0 0 24 18"><path d="M9 5h13v11H6v-6M22 8h1.500v5H22" fill="none" stroke="#fff" strokeWidth="1.400" /><path d="M10 7h10.500v7.500H8V10l2-1z" fill="#fff" /><path d="M2 0v3M6 0v3M.5 3.500h7V7L6 8.500H2L.5 7zM4 9v4h2" fill="none" stroke="#fff" strokeWidth="1.400" /></Svg></TrayItem>
            <TrayItem $mr={15}><Line w={18} h={18} color="#fff" sw={1.400}><path d="M.7 17Q1 1 17 .7" stroke="#8fa2b8" /><path d="M4.500 17Q5 5.500 17 5M8.500 17Q9 10 17 9.500" /><path d="M12 17q.5-3 5-3.500" /><circle cx="16" cy="16.500" r="1" fill="#fff" /></Line></TrayItem>
            <TrayItem $mr={18}><Line w={22} h={18} color="#fff" sw={1.400}><path d="M1 6h3.500L9.500 1v16l-5-5H1zM13 6.500q1.500 2.500 0 5M16 4.500q2.500 4.500 0 9" /><path d="M19 2q4 7 0 14" stroke="#6f86a1" /></Line></TrayItem>
          </Tray>
          <Clock><div>14:53</div><div>16-01-2024</div></Clock>
          <Notifications />
          <PeekEdge />
        </Taskbar>
      </Desktop>
    </>
  );
}
